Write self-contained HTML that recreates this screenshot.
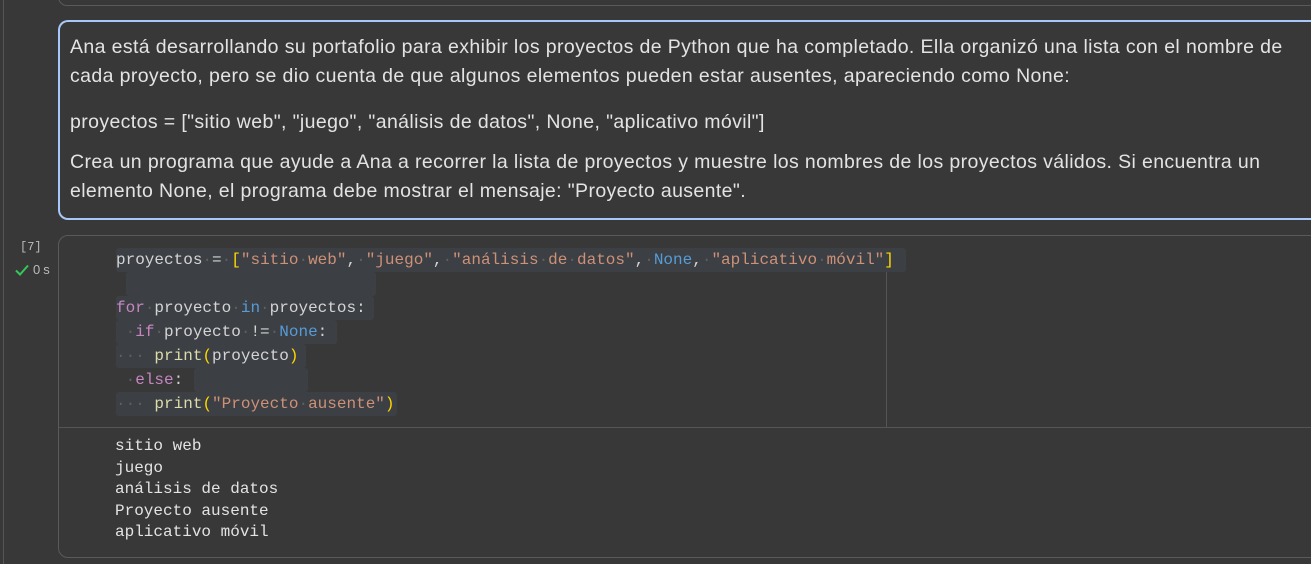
<!DOCTYPE html>
<html><head><meta charset="utf-8"><style>
body{margin:0;width:1311px;height:564px;background:#383838;overflow:hidden;position:relative;font-family:"Liberation Sans",sans-serif}
.abs{position:absolute}
.md{left:58px;top:20px;width:1260px;height:200px;border:2px solid #a8c7fa;border-right:none;border-radius:10px 0 0 10px;box-sizing:border-box}
.md p{position:absolute;left:10px;margin:0;color:#e3e3e3;font-size:19.5px;line-height:29px;white-space:nowrap;letter-spacing:0.38px}
.cell{left:58px;top:235px;width:1270px;height:323px;border:1px solid #5a5a5a;border-radius:10px;box-sizing:border-box}
.code{font-family:"Liberation Mono","DejaVu Sans Mono",monospace;font-size:16px;white-space:pre;color:#d4d4d4}
.ln{position:absolute;left:116px;height:24px;line-height:24px}
.hl{background:#3c3f44;border-radius:3px}
.d{color:#5e5e5e}
.k{color:#c586c0}.b{color:#569cd6}.s{color:#ce9178}.y{color:#ffd700}.f{color:#dcdcaa}.i{color:#9cdcfe}
.out{position:absolute;left:115px;line-height:21.6px;color:#e3e3e3;font-family:"Liberation Mono","DejaVu Sans Mono",monospace;font-size:16px;white-space:pre}
</style></head><body>
<div class="abs" style="left:3px;top:0;width:1px;height:564px;background:#555"></div>
<div class="abs" style="left:58px;top:-12px;width:1260px;height:18px;border:1px solid #5a5a5a;border-radius:10px;box-sizing:border-box"></div>
<div class="abs md">
<p style="top:11px">Ana está desarrollando su portafolio para exhibir los proyectos de Python que ha completado. Ella organizó una lista con el nombre de</p>
<p style="top:40px">cada proyecto, pero se dio cuenta de que algunos elementos pueden estar ausentes, apareciendo como None:</p>
<p style="top:86px">proyectos = ["sitio web", "juego", "análisis de datos", None, "aplicativo móvil"]</p>
<p style="top:126px">Crea un programa que ayude a Ana a recorrer la lista de proyectos y muestre los nombres de los proyectos válidos. Si encuentra un</p>
<p style="top:155px">elemento None, el programa debe mostrar el mensaje: "Proyecto ausente".</p>
</div>
<div class="abs" style="left:20px;top:240px;color:#bbb;font-family:'Liberation Mono',monospace;font-size:12px">[7]</div>
<svg class="abs" style="left:14px;top:263px" width="16" height="14" viewBox="0 0 16 14"><path d="M2 7.5 L6 11.5 L14 2.5" stroke="#34c759" stroke-width="2" fill="none"/></svg>
<div class="abs" style="left:33px;top:262px;color:#bbb;font-size:13px">0<span style="margin-left:3px">s</span></div>
<div class="abs cell"></div>
<div class="abs" style="left:59px;top:427px;width:1252px;height:1px;background:#555"></div>
<div class="abs" style="left:886px;top:248px;width:1px;height:179px;background:#555"></div>
<div class="code">
<div class="ln hl" style="top:248px;padding-right:12px">proyectos<span class="d">·</span>=<span class="d">·</span><span class="y">[</span><span class="s">"sitio<span class="d">·</span>web"</span>,<span class="d">·</span><span class="s">"juego"</span>,<span class="d">·</span><span class="s">"análisis<span class="d">·</span>de<span class="d">·</span>datos"</span>,<span class="d">·</span><span class="b">None</span>,<span class="d">·</span><span class="s">"aplicativo<span class="d">·</span>móvil"</span><span class="y">]</span></div>
<div class="ln hl" style="top:272px;left:126px;width:250px"> </div>
<div class="ln hl" style="top:296px;padding-right:8px"><span class="k">for</span><span class="d">·</span>proyecto<span class="d">·</span><span class="b">in</span><span class="d">·</span>proyectos:</div>
<div class="ln hl" style="top:320px;padding-right:10px"> <span class="d">·</span><span class="k">if</span><span class="d">·</span>proyecto<span class="d">·</span>!=<span class="d">·</span><span class="b">None</span>:</div>
<div class="ln hl" style="top:344px;padding-right:8px"><span class="d">···</span> <span class="f">print</span><span class="y">(</span>proyecto<span class="y">)</span></div>
<div class="ln" style="top:368px"> <span class="d">·</span><span class="k">else</span>:</div>
<div class="ln hl" style="top:368px;left:194px;width:114px"> </div>
<div class="ln hl" style="top:392px;padding-right:2px"><span class="d">···</span> <span class="f">print</span><span class="y">(</span><span class="s">"Proyecto<span class="d">·</span>ausente"</span><span class="y">)</span></div>
</div>
<div class="out" style="top:436px">sitio web
juego
análisis de datos
Proyecto ausente
aplicativo móvil</div>
</body></html>
